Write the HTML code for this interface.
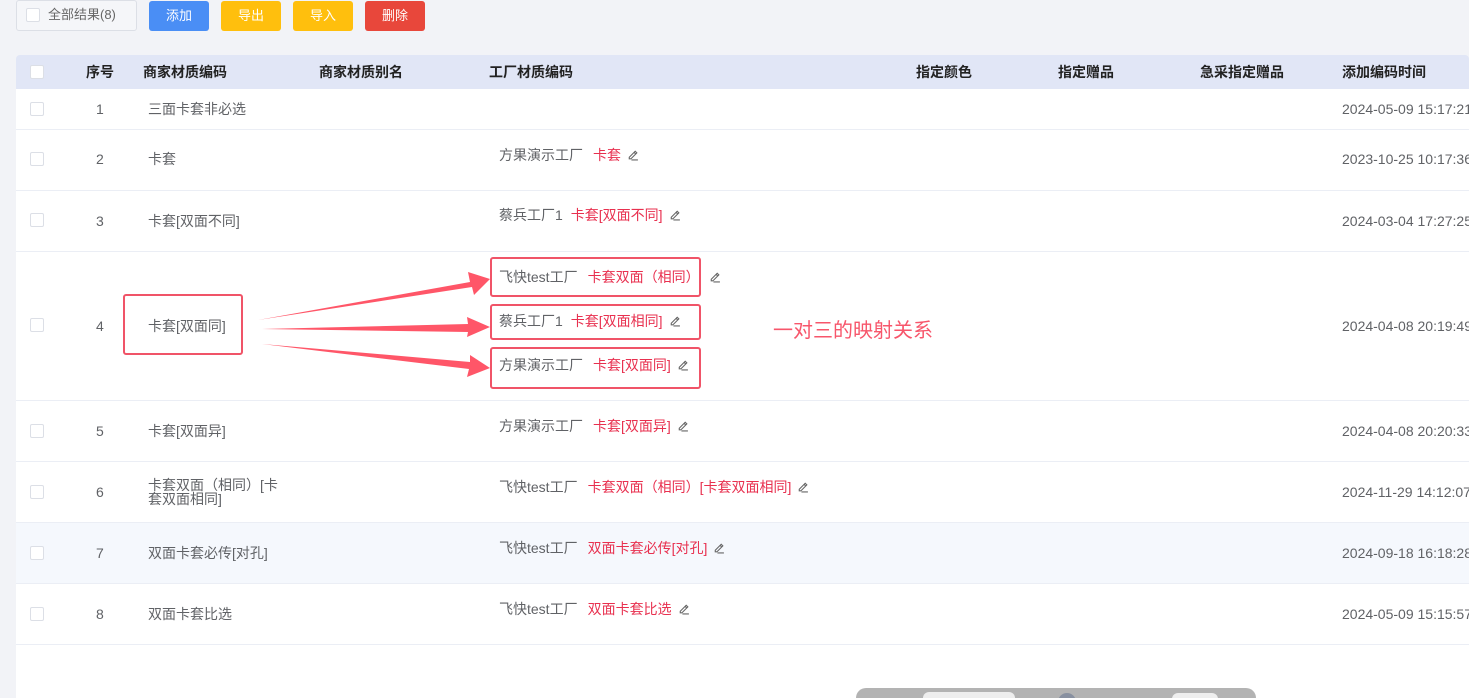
<!DOCTYPE html>
<html><head><meta charset="utf-8"><style>
*{margin:0;padding:0;box-sizing:border-box}
html{overflow:hidden;width:1469px;height:698px}
body{width:1469px;height:698px;overflow:hidden;background:#f2f3f7;font-family:"Liberation Sans","Noto Sans CJK SC",sans-serif;position:relative;color:#606266;font-size:14px}
.a{position:absolute;white-space:nowrap;line-height:20px}
.btn{position:absolute;top:1px;height:30px;width:60px;border-radius:3px;color:#fff;font-size:13px;text-align:center;line-height:30px}
.cb{position:absolute;width:14px;height:14px;border:1px solid #dcdfe6;border-radius:2px;background:#fff}
.row{position:absolute;left:16px;right:0;background:#fff;border-bottom:1px solid #ebeef5}
.h{font-weight:bold;color:#222;font-size:14px}
.red{color:#e8304f;margin-left:8px}
.pen{display:inline-block;width:13px;height:13px;vertical-align:-1px;margin-left:5px}
.box{position:absolute;border:2px solid #f05468;border-radius:3px}
</style></head><body>
<div class="a" style="left:16px;top:0;width:121px;height:31px;border:1px solid #dcdfe6;border-radius:3px;background:#f5f6f9"></div>
<div class="cb" style="left:26px;top:8px"></div>
<div class="a" style="left:48px;top:5px;color:#666;font-size:13px">全部结果(8)</div>
<div class="btn" style="left:149px;background:#4a8ef5">添加</div>
<div class="btn" style="left:221px;background:#ffbf0d">导出</div>
<div class="btn" style="left:293px;background:#ffbf0d">导入</div>
<div class="btn" style="left:365px;background:#e8473b">删除</div>

<div class="a" style="left:16px;top:55px;right:0;height:34px;background:#e1e6f6;border-radius:4px 4px 0 0"></div>
<div class="a" style="left:16px;top:89px;right:0;height:609px;background:#fff"></div>
<div class="cb" style="left:30px;top:65px"></div>
<div class="a h" style="left:86px;top:62px">序号</div>
<div class="a h" style="left:143px;top:62px">商家材质编码</div>
<div class="a h" style="left:319px;top:62px">商家材质别名</div>
<div class="a h" style="left:489px;top:62px">工厂材质编码</div>
<div class="a h" style="left:916px;top:62px">指定颜色</div>
<div class="a h" style="left:1058px;top:62px">指定赠品</div>
<div class="a h" style="left:1200px;top:62px">急采指定赠品</div>
<div class="a h" style="left:1342px;top:62px">添加编码时间</div>

<div class="row" style="top:89px;height:41px"></div>
<div class="row" style="top:130px;height:61px"></div>
<div class="row" style="top:191px;height:61px"></div>
<div class="row" style="top:252px;height:149px"></div>
<div class="row" style="top:401px;height:61px"></div>
<div class="row" style="top:462px;height:61px"></div>
<div class="row" style="top:523px;height:61px;background:#f5f8fd"></div>
<div class="row" style="top:584px;height:61px"></div>

<svg width="0" height="0" style="position:absolute"><defs><symbol id="p" viewBox="0 0 12 12"><path d="M3 8.5L8.5 3l1.5 1.5L4.5 10H3z M7.5 4l1.5 1.5 M5 11h6" fill="none" stroke="#666" stroke-width="1"/></symbol></defs></svg>

<div class="cb" style="left:30px;top:102px"></div><div class="a" style="left:96px;top:99px">1</div><div class="a" style="left:148px;top:99px">三面卡套非必选</div><div class="a" style="left:1342px;top:99px">2024-05-09 15:17:21</div>

<div class="cb" style="left:30px;top:152px"></div><div class="a" style="left:96px;top:149px">2</div><div class="a" style="left:148px;top:149px">卡套</div><div class="a" style="left:499px;top:145px">方果演示工厂<span class="red" style="margin-left:10px">卡套</span><svg class="pen"><use href="#p"/></svg></div><div class="a" style="left:1342px;top:149px">2023-10-25 10:17:36</div>

<div class="cb" style="left:30px;top:213px"></div><div class="a" style="left:96px;top:211px">3</div><div class="a" style="left:148px;top:211px">卡套[双面不同]</div><div class="a" style="left:499px;top:205px">蔡兵工厂1<span class="red">卡套[双面不同]</span><svg class="pen"><use href="#p"/></svg></div><div class="a" style="left:1342px;top:211px">2024-03-04 17:27:25</div>

<div class="cb" style="left:30px;top:318px"></div><div class="a" style="left:96px;top:316px">4</div><div class="a" style="left:148px;top:316px">卡套[双面同]</div>
<div class="box" style="left:123px;top:294px;width:120px;height:61px"></div>
<div class="box" style="left:490px;top:257px;width:211px;height:40px"></div>
<div class="box" style="left:490px;top:304px;width:211px;height:36px"></div>
<div class="box" style="left:490px;top:347px;width:211px;height:42px"></div>
<div class="a" style="left:499px;top:267px">飞快test工厂<span class="red" style="margin-left:10px">卡套双面（相同）</span><svg class="pen" style="margin-left:8px"><use href="#p"/></svg></div>
<div class="a" style="left:499px;top:311px">蔡兵工厂1<span class="red">卡套[双面相同]</span><svg class="pen"><use href="#p"/></svg></div>
<div class="a" style="left:499px;top:355px">方果演示工厂<span class="red" style="margin-left:10px">卡套[双面同]</span><svg class="pen"><use href="#p"/></svg></div>
<div class="a" style="left:773px;top:318px;font-size:20px;line-height:26px;color:#f7566b">一对三的映射关系</div>
<div class="a" style="left:1342px;top:316px">2024-04-08 20:19:49</div>
<svg class="a" style="left:0;top:0" width="600" height="400"><g fill="#ff5668">
<polygon points="258,320 470,282 468,272 490,279 474,295 472,287"/>
<polygon points="262,329 468,324 467,317 490,327 467,337 468,332"/>
<polygon points="262,344 470,362 470,355 490,368 467,377 469,369"/>
</g></svg>

<div class="cb" style="left:30px;top:424px"></div><div class="a" style="left:96px;top:421px">5</div><div class="a" style="left:148px;top:421px">卡套[双面异]</div><div class="a" style="left:499px;top:416px">方果演示工厂<span class="red" style="margin-left:10px">卡套[双面异]</span><svg class="pen"><use href="#p"/></svg></div><div class="a" style="left:1342px;top:421px">2024-04-08 20:20:33</div>

<div class="cb" style="left:30px;top:485px"></div><div class="a" style="left:96px;top:482px">6</div><div class="a" style="left:148px;top:478px;line-height:14px">卡套双面（相同）[卡<br>套双面相同]</div><div class="a" style="left:499px;top:477px">飞快test工厂<span class="red" style="margin-left:10px">卡套双面（相同）[卡套双面相同]</span><svg class="pen"><use href="#p"/></svg></div><div class="a" style="left:1342px;top:482px">2024-11-29 14:12:07</div>

<div class="cb" style="left:30px;top:546px"></div><div class="a" style="left:96px;top:543px">7</div><div class="a" style="left:148px;top:543px">双面卡套必传[对孔]</div><div class="a" style="left:499px;top:538px">飞快test工厂<span class="red" style="margin-left:10px">双面卡套必传[对孔]</span><svg class="pen"><use href="#p"/></svg></div><div class="a" style="left:1342px;top:543px">2024-09-18 16:18:28</div>

<div class="cb" style="left:30px;top:607px"></div><div class="a" style="left:96px;top:604px">8</div><div class="a" style="left:148px;top:604px">双面卡套比选</div><div class="a" style="left:499px;top:599px">飞快test工厂<span class="red" style="margin-left:10px">双面卡套比选</span><svg class="pen"><use href="#p"/></svg></div><div class="a" style="left:1342px;top:604px">2024-05-09 15:15:57</div>

<div class="a" style="left:856px;top:688px;width:400px;height:20px;background:#b3b3b3;border-radius:10px"></div>
<div class="a" style="left:923px;top:692px;width:92px;height:12px;background:#eee;border-radius:6px"></div>
<div class="a" style="left:1058px;top:693px;width:18px;height:18px;background:#8890a0;border-radius:50%"></div>
<div class="a" style="left:1172px;top:693px;width:46px;height:12px;background:#eee;border-radius:6px"></div>
</body></html>
